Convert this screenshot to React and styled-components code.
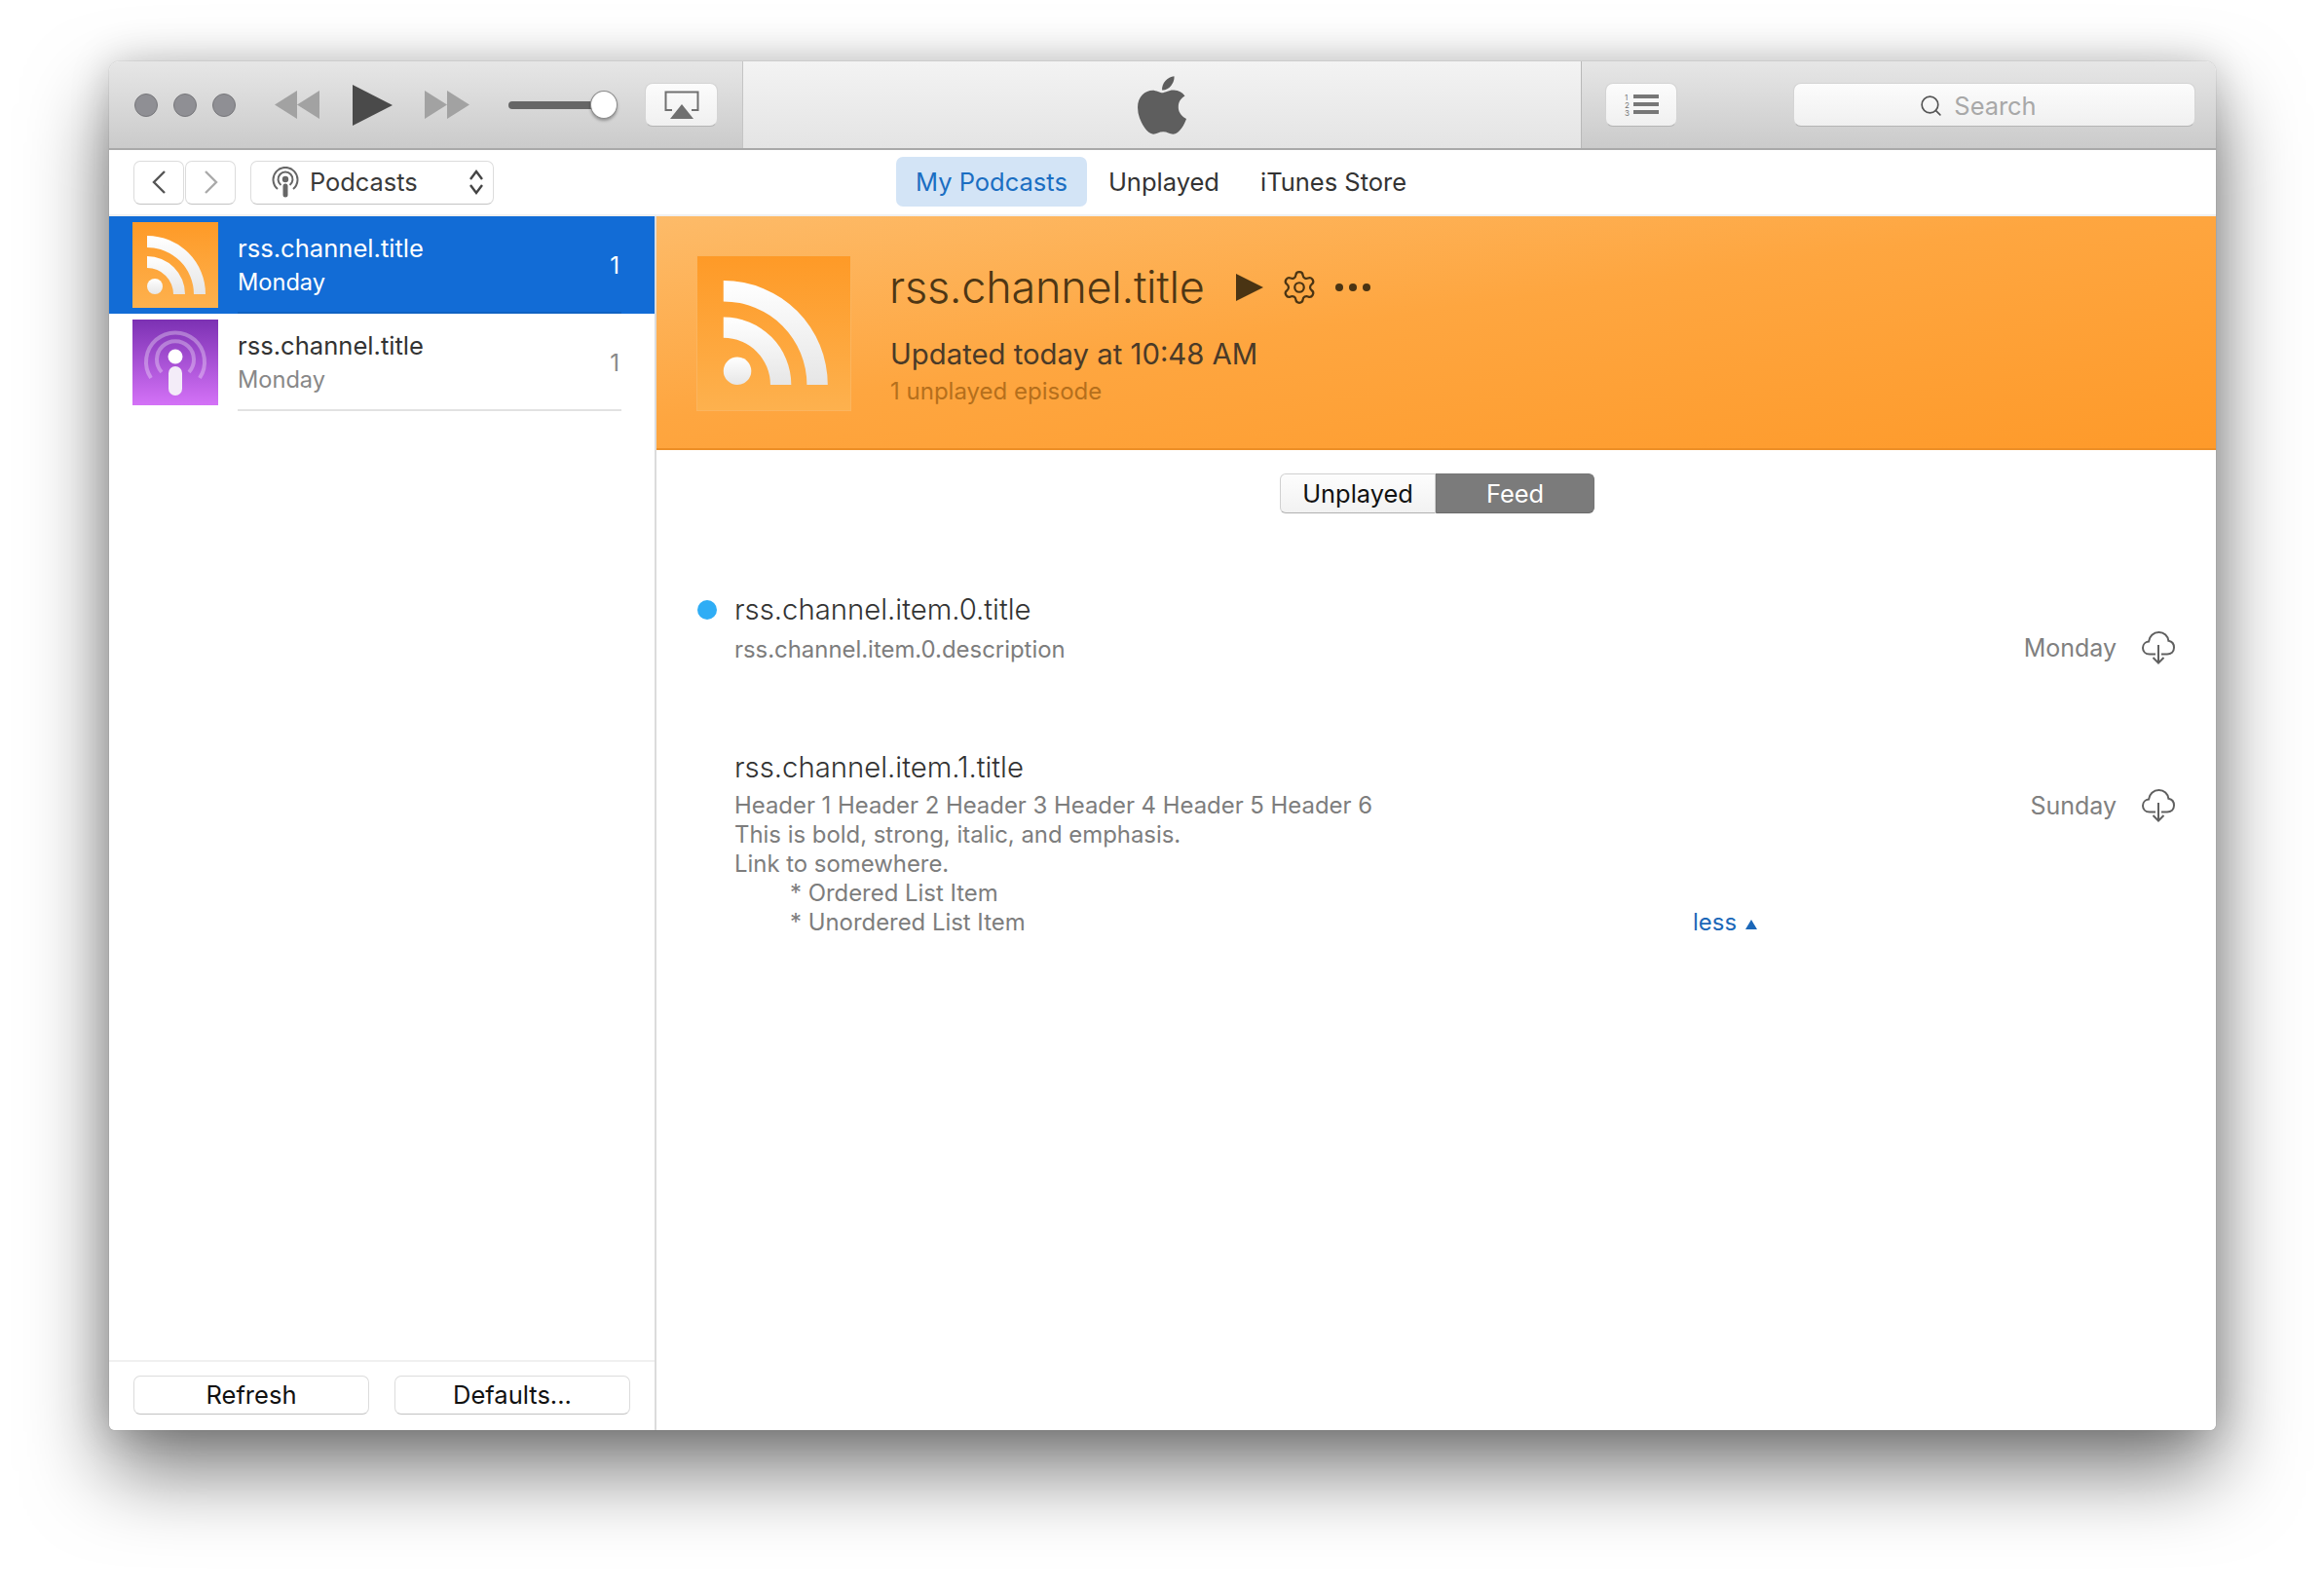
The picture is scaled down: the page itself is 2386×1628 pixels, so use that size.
import styled, { createGlobalStyle } from 'styled-components';
import { FaApple } from 'react-icons/fa';
import { Settings, Search } from 'lucide-react';

const GlobalStyle = createGlobalStyle`
  html, body {
    margin: 0;
    background: #fff;
  }
  * {
    box-sizing: border-box;
  }
  body {
    font-family: Inter, "Liberation Sans", sans-serif;
    color: #333;
  }
`;

const Page = styled.div`
  width: 2386px;
  height: 1628px;
  padding: 63px 111px 0 112px;
  overflow: hidden;
  background: #fff;
`;

const Window = styled.div`
  width: 2163px;
  height: 1405px;
  display: flex;
  flex-direction: column;
  border-radius: 10px 10px 6px 6px;
  overflow: hidden;
  background: #fff;
`;

const WindowShadow = styled.div`
  width: 2163px;
  height: 1405px;
  border-radius: 10px 10px 6px 6px;
  box-shadow: 0 42px 84px rgba(0, 0, 0, 0.52), 0 0 40px rgba(0, 0, 0, 0.18), 0 0 1px rgba(0, 0, 0, 0.45);
`;

const Toolbar = styled.div`
  height: 91px;
  flex: none;
  display: flex;
  border-bottom: 2px solid #a9a9a9;
  background: linear-gradient(#e6e6e6, #cbcbcb);
`;

const PlayerControls = styled.div`
  width: 650px;
  flex: none;
  display: flex;
  align-items: center;
  padding-left: 26px;
`;

const Lights = styled.div`
  display: flex;
  gap: 16px;
  margin-right: 40px;
`;

const Light = styled.span`
  width: 24px;
  height: 24px;
  border-radius: 50%;
  background: #8f8f94;
  border: 1px solid #77777b;
`;

const TransportIcon = styled.svg`
  display: block;
  flex: none;
  margin-right: ${(p) => p.$gap}px;
  fill: ${(p) => p.$color};
`;

const VolumeTrack = styled.div`
  position: relative;
  width: 90px;
  height: 8px;
  margin-right: 50px;
  border-radius: 4px;
  background: #666;
  margin-left: 4px;
`;

const VolumeKnob = styled.span`
  position: absolute;
  right: -22px;
  top: -11px;
  width: 28px;
  height: 29px;
  border-radius: 50%;
  background: #fff;
  border: 1px solid #8a8a8a;
  box-shadow: 0 2px 3px rgba(0, 0, 0, 0.3);
`;

const ToolButton = styled.button`
  width: ${(p) => p.$width}px;
  height: 45px;
  flex: none;
  padding: 0;
  display: flex;
  align-items: center;
  justify-content: center;
  border: 1px solid #d4d4d4;
  border-bottom-color: #b5b5b5;
  border-radius: 8px;
  background: linear-gradient(#fcfcfc, #f0f0f0);
  font-family: inherit;
`;

const LogoPanel = styled.div`
  flex: 1;
  display: flex;
  align-items: center;
  justify-content: center;
  border-left: 1px solid #c4c4c4;
  border-right: 1px solid #b8b8b8;
  background: linear-gradient(#f3f3f3, #e4e4e4);
  color: #5e5e5e;
  font-size: 68px;
`;

const RightControls = styled.div`
  width: 651px;
  flex: none;
  display: flex;
  align-items: center;
  padding-left: 24px;
  padding-right: 21px;
  justify-content: space-between;
`;

const SearchBox = styled.div`
  width: 413px;
  height: 45px;
  display: flex;
  align-items: center;
  justify-content: center;
  gap: 11px;
  padding: 2px 36px 0 0;
  border: 1px solid #d4d4d4;
  border-bottom-color: #b5b5b5;
  border-radius: 8px;
  background: linear-gradient(#fcfcfc, #f0f0f0);
  color: #a8a8a8;
  font-size: 25.4px;
  svg {
    color: #555;
    margin-left: 2px;
  }
`;

const NavBar = styled.div`
  height: 68px;
  flex: none;
  display: flex;
  align-items: center;
  position: relative;
  padding-left: 25px;
  border-bottom: 2px solid #f0f0f0;
`;

const NavButton = styled.button`
  width: ${(p) => p.$width}px;
  height: 45px;
  flex: none;
  padding: 0;
  display: flex;
  align-items: center;
  justify-content: center;
  margin-right: ${(p) => p.$gap || 0}px;
  border: 1px solid #dcdcdc;
  border-bottom-color: #c4c4c4;
  border-radius: 7px;
  background: #fff;
`;

const PodcastSelect = styled.div`
  width: 250px;
  height: 45px;
  flex: none;
  display: flex;
  align-items: center;
  padding: 0 9px 0 21px;
  border: 1px solid #dcdcdc;
  border-bottom-color: #c4c4c4;
  border-radius: 7px;
  background: #fff;
  font-size: 25.4px;
  color: #3a3a3a;
`;

const SelectLabel = styled.span`
  flex: 1;
  margin-left: 11px;
  padding-bottom: 2px;
`;

const Tabs = styled.div`
  position: absolute;
  left: 808px;
  top: 7px;
  display: flex;
  align-items: center;
  height: 51px;
`;

const Tab = styled.div`
  height: 51px;
  display: flex;
  align-items: center;
  padding: 0 ${(p) => p.$pad}px;
  margin-right: ${(p) => p.$gap || 0}px;
  border-radius: 7px;
  font-size: 25.5px;
  color: ${(p) => (p.$active ? '#1b6ec2' : '#333')};
  background: ${(p) => (p.$active ? '#d3e4f6' : 'transparent')};
`;

const Body = styled.div`
  flex: 1;
  min-height: 0;
  display: flex;
`;

const Sidebar = styled.aside`
  width: 562px;
  flex: none;
  display: flex;
  flex-direction: column;
  border-right: 2px solid #dcdcdc;
`;

const PodcastList = styled.div`
  flex: 1;
`;

const PodcastRow = styled.div`
  height: 100px;
  display: flex;
  padding: 6px 0 0 24px;
  background: ${(p) => (p.$selected ? '#126cd6' : '#fff')};
  color: ${(p) => (p.$selected ? '#fff' : '#333')};
`;

const Thumb = styled.div`
  width: 88px;
  height: 88px;
  flex: none;
  background: ${(p) => p.$bg};
  svg {
    display: block;
  }
`;

const RowInfo = styled.div`
  width: 394px;
  height: 94px;
  margin-left: 20px;
  position: relative;
  padding-top: 11px;
  border-bottom: 2px solid ${(p) => (p.$selected ? '#0f62c2' : '#e2e2e2')};
`;

const RowTitle = styled.div`
  font-size: 25.6px;
  line-height: 32px;
`;

const RowSub = styled.div`
  margin-top: 3px;
  font-size: 23.6px;
  line-height: 32px;
  color: ${(p) => (p.$selected ? '#fff' : '#888')};
`;

const RowCount = styled.span`
  position: absolute;
  right: 2px;
  top: 29px;
  font-size: 24px;
  line-height: 32px;
  color: ${(p) => (p.$selected ? '#fff' : '#888')};
`;

const SidebarFooter = styled.div`
  height: 72px;
  flex: none;
  display: flex;
  gap: 26px;
  padding: 14px 0 0 25px;
  border-top: 2px solid #f0f0f0;
`;

const FooterButton = styled.button`
  width: 242px;
  height: 40px;
  padding: 0 0 2px;
  border: 1px solid #dcdcdc;
  border-bottom-color: #c2c2c2;
  border-radius: 7px;
  background: #fff;
  font-family: inherit;
  font-size: 25.5px;
  color: #111;
`;

const Main = styled.main`
  flex: 1;
  min-width: 0;
`;

const ChannelHeader = styled.header`
  height: 240px;
  display: flex;
  padding: 40px 0 0 41px;
  background: linear-gradient(172deg, #fdbb69 0%, #fea640 45%, #fe9a2a 100%);
  border-bottom: 2px solid #ec8e26;
`;

const ChannelArt = styled.div`
  width: 159px;
  height: 160px;
  flex: none;
  border: 1px solid #fbb55f;
  background: linear-gradient(#fe9a27, #fdb14e);
  svg {
    display: block;
  }
`;

const ChannelInfo = styled.div`
  margin-left: 39px;
`;

const ChannelTitleRow = styled.div`
  display: flex;
  align-items: center;
  height: 66px;
`;

const ChannelTitle = styled.h1`
  margin: 0 32px 0 0;
  font-size: 45px;
  font-weight: 300;
  line-height: 66px;
  letter-spacing: -0.25px;
  color: #4e3614;
`;

const HeaderPlay = styled.svg`
  display: block;
  fill: #4a3413;
  margin-right: 18px;
`;

const HeaderDots = styled.div`
  display: flex;
  gap: 6px;
  margin-left: 18px;
`;

const HeaderDot = styled.span`
  width: 8px;
  height: 8px;
  border-radius: 50%;
  background: #4a3413;
`;

const UpdatedLine = styled.div`
  margin-top: 16px;
  margin-left: 1px;
  font-size: 29.3px;
  line-height: 40px;
  color: #4a3a28;
`;

const UnplayedLine = styled.div`
  margin-left: 1px;
  font-size: 24px;
  line-height: 36px;
  color: #b56f1c;
`;

const SegmentWrap = styled.div`
  display: flex;
  justify-content: center;
  margin-top: 24px;
  padding-left: 2px;
`;

const Segment = styled.div`
  width: ${(p) => p.$width}px;
  height: 41px;
  display: flex;
  align-items: center;
  justify-content: center;
  font-size: 25.4px;
  border: 1px solid ${(p) => (p.$on ? '#757575' : '#d0d0d0')};
  border-bottom-color: ${(p) => (p.$on ? '#6a6a6a' : '#b0b0b0')};
  border-radius: ${(p) => (p.$on ? '0 6px 6px 0' : '6px 0 0 6px')};
  background: ${(p) => (p.$on ? '#7b7b7b' : 'linear-gradient(#fdfdfd, #f2f2f2)')};
  color: ${(p) => (p.$on ? '#fff' : '#111')};
`;

const Episodes = styled.div`
  padding: 0 42px 0 42px;
`;

const Episode = styled.article`
  display: grid;
  grid-template-columns: 38px 1fr auto 34px;
  column-gap: 0;
  margin-top: ${(p) => p.$top}px;
`;

const UnreadDot = styled.span`
  width: 20px;
  height: 20px;
  align-self: center;
  border-radius: 50%;
  background: #2fadf5;
`;

const EpisodeTitle = styled.h2`
  grid-column: 2 / 5;
  margin: 0;
  font-size: 29.3px;
  font-weight: 300;
  line-height: 38px;
  color: #333;
`;

const EpisodeBody = styled.div`
  grid-column: 2;
  grid-row: 2;
  width: 1050px;
  margin-top: 5px;
  display: flex;
  justify-content: space-between;
  align-items: flex-end;
  font-size: 23.9px;
  line-height: 30px;
  color: #7d7d7d;
`;

const DescLine = styled.div`
  padding-left: ${(p) => p.$indent || 0}px;
`;

const LessLink = styled.span`
  display: flex;
  align-items: center;
  gap: 9px;
  color: #1b67b8;
`;

const LessArrow = styled.span`
  width: 0;
  height: 0;
  border-left: 6px solid transparent;
  border-right: 6px solid transparent;
  border-bottom: 10px solid #1b67b8;
  margin-top: 3px;
`;

const EpisodeDate = styled.div`
  grid-column: 3;
  grid-row: 2;
  margin-top: 5px;
  margin-right: 26px;
  font-size: 25px;
  line-height: 30px;
  color: #808080;
`;

const CloudSlot = styled.div`
  grid-column: 4;
  grid-row: 2;
  margin-top: 3px;
  color: #606060;
  svg {
    display: block;
  }
`;

const RssIcon = ({ size, id }) => (
  <svg width={size} height={size} viewBox="0 0 88 88">
    <defs>
      <linearGradient id={id} x1="0" y1="0" x2="0" y2="1">
        <stop offset="0" stopColor="#ffffff" />
        <stop offset="1" stopColor="#e6e6e6" />
      </linearGradient>
    </defs>
    <g fill={`url(#${id})`}>
      <path d="M15 14A60 60 0 0 1 75 74H63A48 48 0 0 0 15 26Z" />
      <path d="M15 35A39 39 0 0 1 54 74H42A27 27 0 0 0 15 47Z" />
      <circle cx="23" cy="66" r="8" />
    </g>
  </svg>
);

const PodcastArt = () => (
  <svg width="88" height="88" viewBox="0 0 88 88">
    <g fill="none" stroke="#fff" strokeOpacity="0.32" strokeWidth="4">
      <path d="M19 60A30 30 0 1 1 69 60" />
      <path d="M30 54A19 19 0 1 1 58 54" />
    </g>
    <circle cx="44" cy="38" r="7.5" fill="#fff" />
    <rect x="37" y="48" width="14" height="30" rx="7" fill="#f3ecf8" />
  </svg>
);

const PodcastGlyph = () => (
  <svg width="28" height="32" viewBox="0 0 28 32">
    <g fill="none" stroke="#666" strokeWidth="2">
      <path d="M6 23A12.5 12.5 0 1 1 22 23" />
      <path d="M9.5 19A7.5 7.5 0 1 1 18.5 19" />
    </g>
    <circle cx="14" cy="13" r="3.2" fill="#666" />
    <rect x="11.5" y="17.5" width="5" height="14" rx="2.5" fill="#666" />
  </svg>
);

const CloudDownload = () => (
  <svg width="34" height="34" viewBox="0 0 34 34" fill="none" stroke="currentColor" strokeWidth="2">
    <path d="M14 23.5H8C3.6 23.5 1 20.5 1 17C1 13.5 3.6 10.8 7 10.6C7.6 5 12 1 17.5 1C22.8 1 26.8 4.8 27.4 9.8C31 10.4 33 13.4 33 16.8C33 20.8 30 23.5 26 23.5H20" />
    <path d="M17 14V32.5M11.5 27L17 32.5L22.5 27" />
  </svg>
);

const Chevron = ({ d, color }) => (
  <svg width="16" height="26" viewBox="0 0 16 26" fill="none" stroke={color} strokeWidth="2.4">
    <path d={d} />
  </svg>
);

const Stepper = () => (
  <svg width="16" height="26" viewBox="0 0 16 26" fill="none" stroke="#444" strokeWidth="2.4">
    <path d="M2 10L8 2L14 10M2 16L8 24L14 16" />
  </svg>
);

const App = () => {
  return (
    <Page>
      <GlobalStyle />
      <WindowShadow>
        <Window>
          <Toolbar>
            <PlayerControls>
              <Lights>
                <Light />
                <Light />
                <Light />
              </Lights>
              <TransportIcon $gap={33} $color="#a2a2a2" width="46" height="29" viewBox="0 0 46 29">
                <path d="M23 0V29L0 14.5ZM46 0V29L23 14.5Z" />
              </TransportIcon>
              <TransportIcon $gap={33} $color="#4a4a4a" width="42" height="42" viewBox="0 0 42 42">
                <path d="M1 0L42 21L1 42Z" />
              </TransportIcon>
              <TransportIcon $gap={36} $color="#a2a2a2" width="46" height="29" viewBox="0 0 46 29">
                <path d="M0 0L23 14.5L0 29ZM23 0L46 14.5L23 29Z" />
              </TransportIcon>
              <VolumeTrack>
                <VolumeKnob />
              </VolumeTrack>
              <ToolButton $width={75}>
                <svg width="36" height="30" viewBox="0 0 36 30">
                  <path d="M8 20H1.5V1.5H34.5V20H28" fill="none" stroke="#707070" strokeWidth="2" />
                  <path d="M18 14L30 29H6Z" fill="#707070" />
                </svg>
              </ToolButton>
            </PlayerControls>
            <LogoPanel>
              <FaApple />
            </LogoPanel>
            <RightControls>
              <ToolButton $width={74}>
                <svg width="36" height="24" viewBox="0 0 36 24">
                  <g fill="#777">
                    <rect x="10" y="1" width="26" height="4" />
                    <rect x="10" y="9" width="26" height="4" />
                    <rect x="10" y="17" width="26" height="4" />
                  </g>
                  <g fill="#777" fontSize="8" fontFamily="Inter, sans-serif">
                    <text x="1" y="7">1</text>
                    <text x="1" y="15">2</text>
                    <text x="1" y="23">3</text>
                  </g>
                </svg>
              </ToolButton>
              <SearchBox>
                <Search size={25} strokeWidth={1.6} />
                Search
              </SearchBox>
            </RightControls>
          </Toolbar>

          <NavBar>
            <NavButton $width={52} $gap={1}>
              <Chevron d="M14 2L3 13L14 24" color="#555" />
            </NavButton>
            <NavButton $width={52} $gap={15}>
              <Chevron d="M3 2L14 13L3 24" color="#aaa" />
            </NavButton>
            <PodcastSelect>
              <PodcastGlyph />
              <SelectLabel>Podcasts</SelectLabel>
              <Stepper />
            </PodcastSelect>
            <Tabs>
              <Tab $active $pad={20} $gap={2}>My Podcasts</Tab>
              <Tab $pad={20} $gap={2}>Unplayed</Tab>
              <Tab $pad={20}>iTunes Store</Tab>
            </Tabs>
          </NavBar>

          <Body>
            <Sidebar>
              <PodcastList>
                <PodcastRow $selected>
                  <Thumb $bg="linear-gradient(#fe9a27, #fdb14e)">
                    <RssIcon size={88} id="rss-thumb" />
                  </Thumb>
                  <RowInfo $selected>
                    <RowTitle>rss.channel.title</RowTitle>
                    <RowSub $selected>Monday</RowSub>
                    <RowCount $selected>1</RowCount>
                  </RowInfo>
                </PodcastRow>
                <PodcastRow>
                  <Thumb $bg="linear-gradient(#7c31b3, #d472f7)">
                    <PodcastArt />
                  </Thumb>
                  <RowInfo>
                    <RowTitle>rss.channel.title</RowTitle>
                    <RowSub>Monday</RowSub>
                    <RowCount>1</RowCount>
                  </RowInfo>
                </PodcastRow>
              </PodcastList>
              <SidebarFooter>
                <FooterButton>Refresh</FooterButton>
                <FooterButton>Defaults...</FooterButton>
              </SidebarFooter>
            </Sidebar>

            <Main>
              <ChannelHeader>
                <ChannelArt>
                  <RssIcon size={157} id="rss-art" />
                </ChannelArt>
                <ChannelInfo>
                  <ChannelTitleRow>
                    <ChannelTitle>rss.channel.title</ChannelTitle>
                    <HeaderPlay width="28" height="28" viewBox="0 0 28 28">
                      <path d="M0 0L28 14L0 28Z" />
                    </HeaderPlay>
                    <Settings size={38} strokeWidth={1.4} color="#4a3413" />
                    <HeaderDots>
                      <HeaderDot />
                      <HeaderDot />
                      <HeaderDot />
                    </HeaderDots>
                  </ChannelTitleRow>
                  <UpdatedLine>Updated today at 10:48 AM</UpdatedLine>
                  <UnplayedLine>1 unplayed episode</UnplayedLine>
                </ChannelInfo>
              </ChannelHeader>

              <SegmentWrap>
                <Segment $width={160}>Unplayed</Segment>
                <Segment $width={163} $on>Feed</Segment>
              </SegmentWrap>

              <Episodes>
                <Episode $top={80}>
                  <UnreadDot />
                  <EpisodeTitle>rss.channel.item.0.title</EpisodeTitle>
                  <EpisodeBody>
                    <div>rss.channel.item.0.description</div>
                  </EpisodeBody>
                  <EpisodeDate>Monday</EpisodeDate>
                  <CloudSlot>
                    <CloudDownload />
                  </CloudSlot>
                </Episode>
                <Episode $top={87}>
                  <EpisodeTitle>rss.channel.item.1.title</EpisodeTitle>
                  <EpisodeBody>
                    <div>
                      <DescLine>Header 1 Header 2 Header 3 Header 4 Header 5 Header 6</DescLine>
                      <DescLine>This is bold, strong, italic, and emphasis.</DescLine>
                      <DescLine>Link to somewhere.</DescLine>
                      <DescLine $indent={57}>* Ordered List Item</DescLine>
                      <DescLine $indent={57}>* Unordered List Item</DescLine>
                    </div>
                    <LessLink>less <LessArrow /></LessLink>
                  </EpisodeBody>
                  <EpisodeDate>Sunday</EpisodeDate>
                  <CloudSlot>
                    <CloudDownload />
                  </CloudSlot>
                </Episode>
              </Episodes>
            </Main>
          </Body>
        </Window>
      </WindowShadow>
    </Page>
  );
};

export default App;
